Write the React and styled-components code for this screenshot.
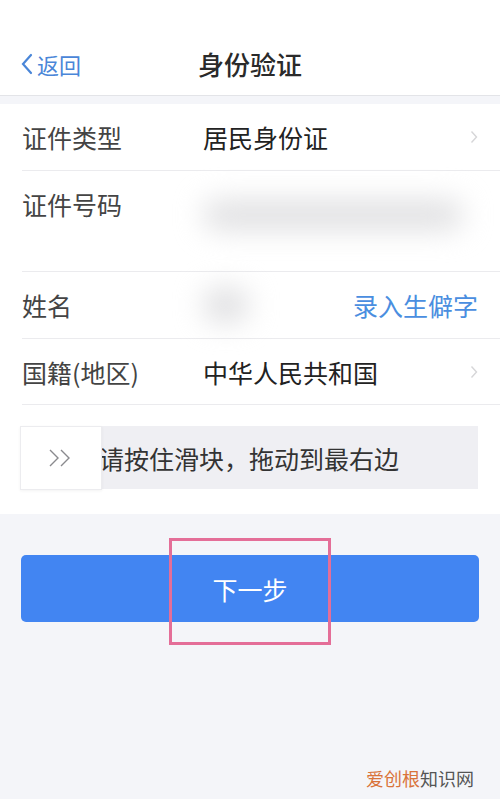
import styled, { createGlobalStyle } from 'styled-components';

const GlobalStyle = createGlobalStyle`
    html, body {
        margin:0;
        padding:0;
        background:#f4f5f9;
        font-family:"Noto Sans CJK SC", "Noto Sans", sans-serif;
    }
`;

function Chevron() {
    return (
        <svg width="8" height="14" viewBox="0 0 8 14">
            <path d="M1.5 1.5 L6.5 7 L1.5 12.5" fill="none" stroke="#d6d6d8" strokeWidth="1.4" />
        </svg>
    )
}

function App() {
    return (
        <Page>
            <GlobalStyle />
            <Header>
                <Back>
                    <svg width="14" height="24" viewBox="0 0 14 24">
                        <path d="M11 3 L3 12 L11 21" fill="none" stroke="#4a86d8" strokeWidth="2.2" strokeLinecap="round" />
                    </svg>
                    返回
                </Back>
                <Title>身份验证</Title>
                <span />
            </Header>
            <Card>
                <Row height={67}>
                    <Label>证件类型</Label>
                    <Value>居民身份证</Value>
                    <Chevron />
                </Row>
                <Row height={101} top>
                    <Label>证件号码</Label>
                    <Blur width={260} />
                </Row>
                <Row height={67}>
                    <Label>姓名</Label>
                    <Blur width={46} round />
                    <Link>录入生僻字</Link>
                </Row>
                <Row height={66}>
                    <Label>国籍(地区)</Label>
                    <Value>中华人民共和国</Value>
                    <Chevron />
                </Row>
                <SliderWrap>
                    <Slider>
                        <Knob>
                            <svg width="28" height="20" viewBox="0 0 28 20">
                                <path d="M3 2 L11 10 L3 18 M14 2 L22 10 L14 18" fill="none" stroke="#8a8a8e" strokeWidth="1.4" />
                            </svg>
                        </Knob>
                        <SliderText>请按住滑块，拖动到最右边</SliderText>
                    </Slider>
                </SliderWrap>
            </Card>
            <ButtonWrap>
                <NextButton>下一步</NextButton>
                <Highlight />
            </ButtonWrap>
            <Watermark><em>爱创根</em>知识网</Watermark>
        </Page>
    )
}

const Page = styled.div`
    position:relative;
    min-height:100vh;
    background:#f4f5f9;
`;
const Header = styled.div`
    display:grid;
    grid-template-columns:1fr auto 1fr;
    align-items:center;
    height:96px;
    padding:32px 20px 0;
    box-sizing:border-box;
    background:#fff;
    border-bottom:1px solid #e3e4e8;
`;
const Back = styled.div`
    display:flex;
    align-items:center;
    gap:3px;
    color:#4a86d8;
    font-size:22px;
`;
const Title = styled.div`
    font-size:26px;
    color:#2a2a2a;
    font-weight:500;
`;
const Card = styled.div`
    margin-top:8px;
    background:#fff;
    padding-left:22px;
`;
const Row = styled.div`
    display:flex;
    align-items:${p => p.top ? 'flex-start' : 'center'};
    height:${p => p.height}px;
    box-sizing:border-box;
    padding-top:${p => p.top ? '15px' : '0'};
    padding-right:22px;
    border-bottom:1px solid #ebebee;
    svg {
        margin-left:auto;
    }
`;
const Label = styled.div`
    width:181px;
    flex-shrink:0;
    font-size:25px;
    color:#444;
`;
const Value = styled.div`
    font-size:25px;
    color:#222;
`;
const Link = styled.div`
    margin-left:auto;
    font-size:25px;
    color:#4a8ee0;
`;
const Blur = styled.div`
    width:${p => p.width}px;
    height:${p => p.round ? 36 : 30}px;
    margin-top:${p => p.round ? 0 : 14}px;
    border-radius:20px;
    background:#e0e0e2;
    filter:blur(14px);
`;
const SliderWrap = styled.div`
    padding:21px 22px 25px 0;
    margin-left:-2px;
`;
const Slider = styled.div`
    position:relative;
    display:flex;
    align-items:center;
    justify-content:center;
    height:63px;
    background:#efeff3;
`;
const Knob = styled.div`
    position:absolute;
    left:0;
    top:0;
    display:flex;
    align-items:center;
    justify-content:center;
    width:82px;
    height:64px;
    background:#fff;
    border:1px solid #ececef;
    box-sizing:border-box;
    box-shadow:0 1px 3px rgba(0,0,0,0.05);
    z-index:1;
`;
const SliderText = styled.div`
    font-size:25px;
    color:#333;
`;
const ButtonWrap = styled.div`
    position:relative;
    margin:41px 21px 0;
`;
const NextButton = styled.button`
    display:block;
    width:100%;
    height:67px;
    border:none;
    border-radius:5px;
    background:#4285f2;
    color:#fff;
    font-family:inherit;
    font-size:25px;
`;
const Highlight = styled.div`
    position:absolute;
    left:148px;
    top:-17px;
    width:162px;
    height:107px;
    box-sizing:border-box;
    border:3px solid #e46e98;
`;
const Watermark = styled.div`
    position:absolute;
    right:26px;
    bottom:8px;
    font-size:18px;
    color:#555;
    em {
        font-style:normal;
        color:#d9733a;
    }
`;

export default App
